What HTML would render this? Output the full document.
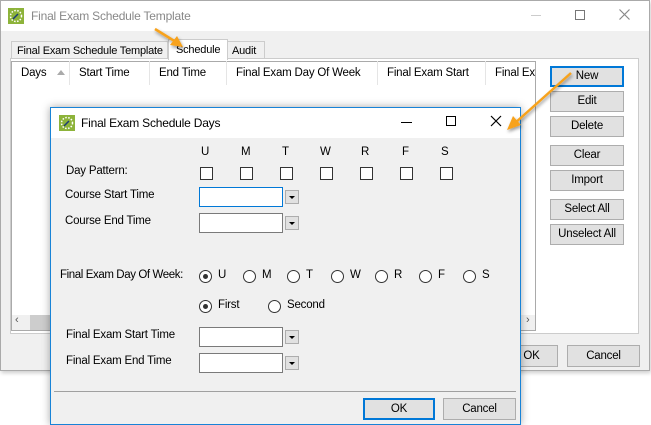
<!DOCTYPE html>
<html><head><style>
*{box-sizing:border-box;margin:0;padding:0}
body{width:651px;height:425px;background:#fff;position:relative;overflow:hidden;font-family:"Liberation Sans",sans-serif;font-size:11.5px;letter-spacing:-0.2px;color:#000}
.a{position:absolute;white-space:nowrap}
.btn{position:absolute;background:#e1e1e1;border:1px solid #adadad;text-align:center;line-height:18px}
.cb{position:absolute;width:13px;height:13px;border:1px solid #333;background:#fff}
.rd{position:absolute;width:13px;height:13px;border:1px solid #333;border-radius:50%;background:#fff}
.inp{position:absolute;width:84px;height:20px;border:1px solid #7a7a7a;background:#fff}
.dd{position:absolute;width:14px;height:14px;border:1px solid #adadad;background:#e1e1e1}
.dd:after{content:"";position:absolute;left:3px;top:5px;border-left:3px solid transparent;border-right:3px solid transparent;border-top:3px solid #000}
.hd{position:absolute;top:61px;height:24px;line-height:24px;border-right:1px solid #e5e5e5;padding-left:9px;white-space:nowrap;overflow:hidden}
</style></head><body>
<div class="a" style="left:0;top:0;width:650px;height:371px;border:1px solid #aaa;background:#f0f0f0;box-shadow:1px 2px 4px rgba(0,0,0,.2)"></div>
<div class="a" style="left:1px;top:1px;width:648px;height:30px;background:#fff"></div>
<svg class="a" style="left:8px;top:8px" width="16" height="16"><rect width="16" height="16" fill="#8db33a"/><circle cx="8" cy="8" r="5.5" fill="none" stroke="#fff" stroke-width="1.5" stroke-dasharray="1.5 1.5"/><line x1="5" y1="11" x2="10" y2="6" stroke="#1d3a78" stroke-width="1.5"/></svg>
<div class="a" style="left:31px;top:9px;font-size:12px;color:#888">Final Exam Schedule Template</div>
<div class="a" style="left:531px;top:15px;width:10px;height:1px;background:#ccc"></div>
<div class="a" style="left:575px;top:10px;width:10px;height:10px;border:1px solid #777"></div>
<svg class="a" style="left:619px;top:9px" width="11" height="11"><path d="M0.5 0.5L10.5 10.5M10.5 0.5L0.5 10.5" stroke="#888" stroke-width="1.2"/></svg>
<div class="a" style="left:11px;top:41px;width:157px;height:18px;border:1px solid #ccc;background:#f0f0f0;padding:3px 0 0 5px;font-size:11px">Final Exam Schedule Template</div>
<div class="a" style="left:227px;top:41px;width:38px;height:18px;border:1px solid #ccc;background:#f0f0f0;padding:3px 0 0 4px;font-size:11px">Audit</div>
<div class="a" style="left:10px;top:58px;width:629px;height:276px;border:1px solid #ccc;background:#fff"></div>
<div class="a" style="left:168px;top:39px;width:60px;height:21px;border:1px solid #ccc;border-bottom:none;background:#fff;padding:4px 0 0 7px;font-size:11px">Schedule</div>
<div class="a" style="left:11px;top:61px;width:525px;height:270px;border:1px solid #aaa;background:#fff"></div>
<div class="hd" style="left:12px;width:58px">Days</div>
<div class="a" style="left:57px;top:70px;border-left:4px solid transparent;border-right:4px solid transparent;border-bottom:5px solid #aaa"></div>
<div class="hd" style="left:70px;width:80px">Start Time</div>
<div class="hd" style="left:150px;width:77px">End Time</div>
<div class="hd" style="left:227px;width:151px">Final Exam Day Of Week</div>
<div class="hd" style="left:378px;width:108px">Final Exam Start</div>
<div class="hd" style="left:486px;width:49px;border:none">Final Exa</div>
<div class="a" style="left:12px;top:315px;width:523px;height:15px;background:#f0f0f0"></div>
<div class="a" style="left:30px;top:315px;width:40px;height:15px;background:#cdcdcd"></div>
<div class="a" style="left:15px;top:314px;color:#555;font-size:11px">‹</div>
<div class="a" style="left:526px;top:314px;color:#555;font-size:11px">›</div>
<div class="btn" style="left:550px;top:66px;width:74px;height:21px;border:2px solid #0078d7;line-height:17px">New</div>
<div class="btn" style="left:550px;top:91px;width:74px;height:21px">Edit</div>
<div class="btn" style="left:550px;top:116px;width:74px;height:21px">Delete</div>
<div class="btn" style="left:550px;top:145px;width:74px;height:21px">Clear</div>
<div class="btn" style="left:550px;top:170px;width:74px;height:21px">Import</div>
<div class="btn" style="left:550px;top:199px;width:74px;height:21px">Select All</div>
<div class="btn" style="left:550px;top:224px;width:74px;height:21px">Unselect All</div>
<div class="btn" style="left:505px;top:345px;width:53px;height:22px;line-height:20px">OK</div>
<div class="btn" style="left:567px;top:345px;width:73px;height:22px;line-height:20px">Cancel</div>
<div class="a" style="left:50px;top:107px;width:471px;height:318px;border:1px solid #1883d7;background:#f0f0f0;box-shadow:0 0 8px rgba(0,0,0,.35)"></div>
<div class="a" style="left:51px;top:108px;width:469px;height:30px;background:#fff"></div>
<svg class="a" style="left:59px;top:115px" width="16" height="16"><rect width="16" height="16" fill="#8db33a"/><circle cx="8" cy="8" r="5.5" fill="none" stroke="#fff" stroke-width="1.5" stroke-dasharray="1.5 1.5"/><line x1="5" y1="11" x2="10" y2="6" stroke="#1d3a78" stroke-width="1.5"/></svg>
<div class="a" style="left:81px;top:116px;font-size:12px">Final Exam Schedule Days</div>
<div class="a" style="left:401px;top:122px;width:11px;height:1px;background:#000"></div>
<div class="a" style="left:446px;top:116px;width:10px;height:10px;border:1px solid #000"></div>
<svg class="a" style="left:490px;top:115px" width="12" height="12"><path d="M1 1L11 11M11 1L1 11" stroke="#000" stroke-width="1.2"/></svg>
<div class="a" style="left:201px;top:146px">U</div>
<div class="a" style="left:241px;top:146px">M</div>
<div class="a" style="left:282px;top:146px">T</div>
<div class="a" style="left:320px;top:146px">W</div>
<div class="a" style="left:361px;top:146px">R</div>
<div class="a" style="left:402px;top:146px">F</div>
<div class="a" style="left:441px;top:146px">S</div>
<div class="a" style="left:66px;top:165px">Day Pattern:</div>
<div class="cb" style="left:200px;top:167px"></div><div class="cb" style="left:240px;top:167px"></div><div class="cb" style="left:280px;top:167px"></div><div class="cb" style="left:320px;top:167px"></div><div class="cb" style="left:360px;top:167px"></div><div class="cb" style="left:400px;top:167px"></div><div class="cb" style="left:440px;top:167px"></div>
<div class="a" style="left:65px;top:189px">Course Start Time</div>
<div class="inp" style="left:199px;top:187px;border-color:#0078d7"></div><div class="dd" style="left:285px;top:190px"></div>
<div class="a" style="left:65px;top:215px">Course End Time</div>
<div class="inp" style="left:199px;top:213px"></div><div class="dd" style="left:285px;top:216px"></div>
<div class="a" style="left:60px;top:269px;letter-spacing:-0.4px">Final Exam Day Of Week:</div>
<div class="rd" style="left:199px;top:270px"><div class="a" style="left:3px;top:3px;width:5px;height:5px;border-radius:50%;background:#333"></div></div><div class="a" style="left:218px;top:269px">U</div>
<div class="rd" style="left:243px;top:270px"></div><div class="a" style="left:262px;top:269px">M</div>
<div class="rd" style="left:287px;top:270px"></div><div class="a" style="left:306px;top:269px">T</div>
<div class="rd" style="left:331px;top:270px"></div><div class="a" style="left:350px;top:269px">W</div>
<div class="rd" style="left:375px;top:270px"></div><div class="a" style="left:394px;top:269px">R</div>
<div class="rd" style="left:419px;top:270px"></div><div class="a" style="left:438px;top:269px">F</div>
<div class="rd" style="left:463px;top:270px"></div><div class="a" style="left:482px;top:269px">S</div>
<div class="rd" style="left:199px;top:300px"><div class="a" style="left:3px;top:3px;width:5px;height:5px;border-radius:50%;background:#333"></div></div><div class="a" style="left:218px;top:299px">First</div>
<div class="rd" style="left:268px;top:300px"></div><div class="a" style="left:287px;top:299px">Second</div>
<div class="a" style="left:66px;top:329px">Final Exam Start Time</div>
<div class="inp" style="left:199px;top:327px"></div><div class="dd" style="left:285px;top:330px"></div>
<div class="a" style="left:66px;top:355px">Final Exam End Time</div>
<div class="inp" style="left:199px;top:353px"></div><div class="dd" style="left:285px;top:356px"></div>
<div class="a" style="left:54px;top:391px;width:462px;height:1px;background:#a0a0a0"></div>
<div class="btn" style="left:363px;top:398px;width:72px;height:22px;border:2px solid #0078d7;line-height:18px">OK</div>
<div class="btn" style="left:443px;top:398px;width:73px;height:22px;line-height:20px">Cancel</div>
<svg class="a" style="left:0;top:0" width="651" height="425">
<defs><filter id="s"><feDropShadow dx="1" dy="2" stdDeviation="1.5" flood-opacity=".4"/></filter></defs>
<g filter="url(#s)" fill="#f7a21b" stroke="#f7a21b">
<path d="M155 29L176 42" stroke-width="2.5"/><path d="M183 47L170 45L177 36Z" stroke="none"/>
<path d="M571 73L515 123" stroke-width="2.5"/><path d="M507 130L513 116L521 125Z" stroke="none"/>
</g></svg>
</body></html>
